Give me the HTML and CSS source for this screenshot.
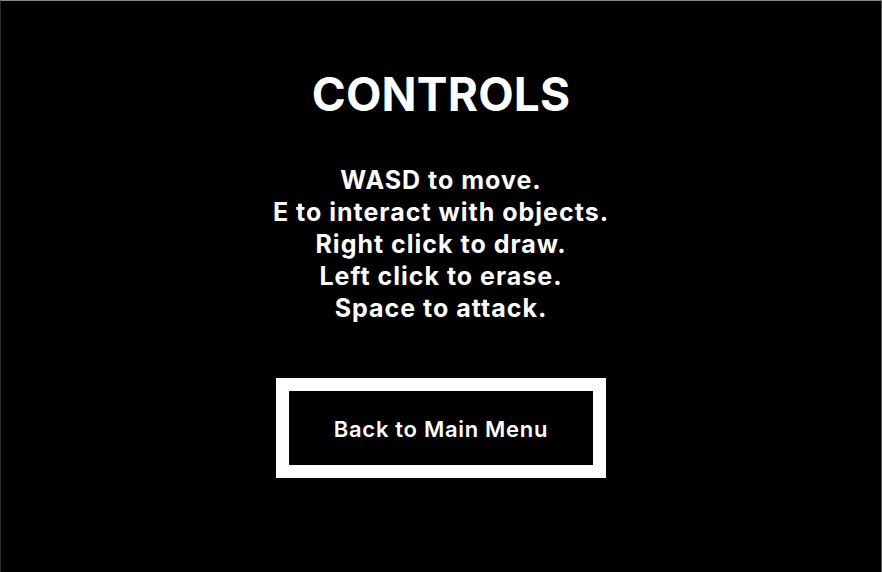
FILE: index.html
```html
<!DOCTYPE html>
<html lang="en">
<head>
<meta charset="utf-8">
<title>Controls</title>
<link rel="stylesheet" href="styles.css">
</head>
<body>
<main class="screen">
  <h1 class="title">CONTROLS</h1>
  <div class="controls">
    <p>WASD to move.</p>
    <p>E to interact with objects.</p>
    <p>Right click to draw.</p>
    <p>Left click to erase.</p>
    <p>Space to attack.</p>
  </div>
  <button class="back">Back to Main Menu</button>
</main>
</body>
</html>
```
FILE: styles.css
```css
html, body {
  margin: 0;
  padding: 0;
  background: #000;
}
.screen {
  box-sizing: border-box;
  width: 882px;
  height: 572px;
  background: #000;
  border-top: 1px solid #8a8a8a;
  border-left: 1px solid #2a2a2a;
  border-right: 1px solid #555;
  display: flex;
  flex-direction: column;
  align-items: center;
  color: #fff;
  font-family: Inter, "Noto Sans", sans-serif;
}
.title {
  margin: 64px 0 0;
  font-size: 46px;
  font-weight: 700;
  line-height: 58px;
  letter-spacing: 0.2px;
}
.controls {
  margin-top: 41px;
  text-align: center;
  font-size: 25px;
  font-weight: 700;
  line-height: 32px;
  letter-spacing: 1px;
}
.controls p {
  margin: 0;
}
.back {
  margin-top: 54px;
  box-sizing: border-box;
  width: 330px;
  height: 100px;
  border: 13px solid #fff;
  background: #000;
  color: #fff;
  font-family: Inter, "Noto Sans", sans-serif;
  font-size: 22px;
  font-weight: 600;
  letter-spacing: 0.7px;
  padding: 2px 0 0;
}
```
